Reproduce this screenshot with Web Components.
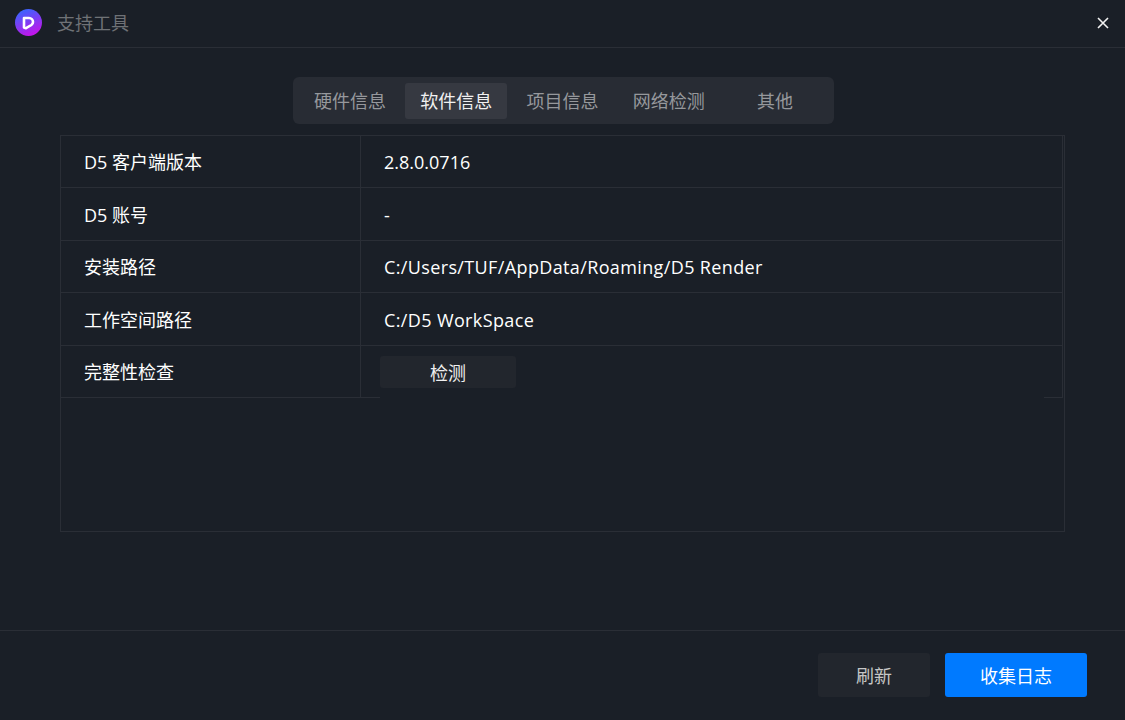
<!DOCTYPE html>
<html lang="zh">
<head>
<meta charset="utf-8">
<title>支持工具</title>
<style>
    html, body { margin: 0; height: 100%; background: #1a1f27; }
    body { font: 18px "Open Sans", "Noto Sans CJK SC", sans-serif; color: #fff; }
</style>
</head>
<body>
<support-dialog>
    <title-bar slot="header">支持工具</title-bar>

    <tab-bar slot="tabs">
        <tab-item>硬件信息</tab-item>
        <tab-item active>软件信息</tab-item>
        <tab-item>项目信息</tab-item>
        <tab-item>网络检测</tab-item>
        <tab-item>其他</tab-item>
    </tab-bar>

    <info-table slot="content">
        <info-row label="D5 客户端版本">2.8.0.0716</info-row>
        <info-row label="D5 账号">-</info-row>
        <info-row label="安装路径" wide>C:/Users/TUF/AppData/Roaming/D5 Render</info-row>
        <info-row label="工作空间路径" wide>C:/D5 WorkSpace</info-row>
        <info-row label="完整性检查" action><app-button size="small">检测</app-button></info-row>
    </info-table>

    <app-button slot="footer" size="refresh">刷新</app-button>
    <app-button slot="footer" size="primary">收集日志</app-button>
</support-dialog>

<script>
class SupportDialog extends HTMLElement {
    constructor() {
        super();
        this.attachShadow({ mode: 'open' });
        this.shadowRoot.innerHTML = `
            <style>
                :host { display: flex; flex-direction: column; height: 720px; width: 1125px; }
                .tabs { display: flex; justify-content: center; padding: 29px 0 11px; margin-right: -2px; }
                .content { padding: 0 60px; }
                .footer {
                    margin-top: auto;
                    box-sizing: border-box;
                    height: 90px;
                    border-top: 1px solid #2a2e36;
                    display: flex;
                    justify-content: flex-end;
                    align-items: flex-start;
                    gap: 15px;
                    padding: 22px 38px 0 0;
                }
            </style>
            <slot name="header"></slot>
            <div class="tabs"><slot name="tabs"></slot></div>
            <div class="content"><slot name="content"></slot></div>
            <div class="footer"><slot name="footer"></slot></div>
        `;
    }
}

class TitleBar extends HTMLElement {
    constructor() {
        super();
        this.attachShadow({ mode: 'open' });
        this.shadowRoot.innerHTML = `
            <style>
                :host {
                    display: flex;
                    align-items: center;
                    height: 47px;
                    border-bottom: 1px solid #2a2e36;
                    padding: 0 15px;
                    color: #6f7276;
                }
                .logo { width: 27px; height: 27px; margin: -3px 15px 0 0; flex: none; }
                .title { flex: 1; margin-top: -3px; }
                .close { width: 12px; height: 12px; margin: -1px 1px 0 0; flex: none; }
            </style>
            <svg class="logo" viewBox="0 0 27 27">
                <defs>
                    <linearGradient id="logo-fill" x1="0.15" y1="0" x2="0.55" y2="1">
                        <stop offset="0" stop-color="#2f6bff"/>
                        <stop offset="1" stop-color="#c414ea"/>
                    </linearGradient>
                </defs>
                <circle cx="13.5" cy="13.5" r="13.5" fill="url(#logo-fill)"/>
                <path d="M9 9h5a4 4 0 0 1 4 4c0 1.3-.6 2.3-1.6 3L11 19.2 9 18.5z" fill="none" stroke="#fff" stroke-width="2.6" stroke-linejoin="round"/>
            </svg>
            <span class="title"><slot></slot></span>
            <svg class="close" viewBox="0 0 12 12">
                <path d="M1 1l10 10M11 1L1 11" stroke="#f2f2f2" stroke-width="1.6" fill="none"/>
            </svg>
        `;
    }
}

class TabBar extends HTMLElement {
    constructor() {
        super();
        this.attachShadow({ mode: 'open' });
        this.shadowRoot.innerHTML = `
            <style>
                :host {
                    display: flex;
                    gap: 4.25px;
                    background: #282c34;
                    border-radius: 6px;
                    padding: 6px 4px 5px 6px;
                    width: 531px;
                }
            </style>
            <slot></slot>
        `;
    }
}

class TabItem extends HTMLElement {
    constructor() {
        super();
        this.attachShadow({ mode: 'open' });
        this.shadowRoot.innerHTML = `
            <style>
                :host {
                    display: flex;
                    flex: none;
                    align-items: center;
                    justify-content: center;
                    box-sizing: border-box;
                    width: 102px;
                    height: 36px;
                    padding-bottom: 3px;
                    border-radius: 3px;
                    color: #96989c;
                    cursor: pointer;
                }
                :host([active]) { background: #363941; color: #f0f0f0; }
            </style>
            <slot></slot>
        `;
    }
}

class InfoTable extends HTMLElement {
    constructor() {
        super();
        this.attachShadow({ mode: 'open' });
        this.shadowRoot.innerHTML = `
            <style>
                :host {
                    display: block;
                    box-sizing: border-box;
                    height: 397px;
                    border: 1px solid #2a2e36;
                    padding-right: 1px;
                }
                .rows { border-right: 1px solid #2a2e36; margin-top: -0.5px; }
            </style>
            <div class="rows"><slot></slot></div>
        `;
    }
}

class InfoRow extends HTMLElement {
    static get observedAttributes() {
        return ['label'];
    }

    constructor() {
        super();
        this.attachShadow({ mode: 'open' });
        this.shadowRoot.innerHTML = `
            <style>
                :host {
                    display: grid;
                    grid-template-columns: 299px 1fr;
                    box-sizing: border-box;
                    height: 52.5px;
                    border-bottom: 1px solid #2a2e36;
                    position: relative;
                }
                .label { display: flex; align-items: center; padding-left: 23px; }
                .value {
                    display: flex;
                    align-items: center;
                    border-left: 1px solid #2a2e36;
                    padding-left: 23px;
                }
                .value span { margin-top: 2px; }
                /* Open Sans 比原图字体窄一点 */
                :host([wide]) .value span { letter-spacing: 0.37px; }
                :host([action]) .value { padding-left: 19px; }
                /* 按钮行的下边框中间被盖住 */
                :host([action])::after {
                    content: '';
                    position: absolute;
                    left: 319px;
                    right: 18px;
                    bottom: -1px;
                    height: 1px;
                    background: #1a1f27;
                }
            </style>
            <div class="label"></div>
            <div class="value"><span><slot></slot></span></div>
        `;
    }

    attributeChangedCallback(name, oldValue, newValue) {
        this.shadowRoot.querySelector('.label').textContent = newValue;
    }
}

class AppButton extends HTMLElement {
    constructor() {
        super();
        this.attachShadow({ mode: 'open' });
        this.shadowRoot.innerHTML = `
            <style>
                :host {
                    display: inline-flex;
                    align-items: center;
                    justify-content: center;
                    box-sizing: border-box;
                    padding-bottom: 1px;
                    border-radius: 3px;
                    background: #22262d;
                    cursor: pointer;
                }
                :host([size="small"]) { width: 136px; height: 32px; color: #f0f0f0; }
                :host([size="refresh"]) { width: 112px; height: 44px; color: #c6c6c6; }
                :host([size="primary"]) { width: 142px; height: 44px; background: #007aff; color: #fff; }
            </style>
            <slot></slot>
        `;
    }
}

customElements.define('support-dialog', SupportDialog);
customElements.define('title-bar', TitleBar);
customElements.define('tab-bar', TabBar);
customElements.define('tab-item', TabItem);
customElements.define('info-table', InfoTable);
customElements.define('info-row', InfoRow);
customElements.define('app-button', AppButton);
</script>
</body>
</html>
